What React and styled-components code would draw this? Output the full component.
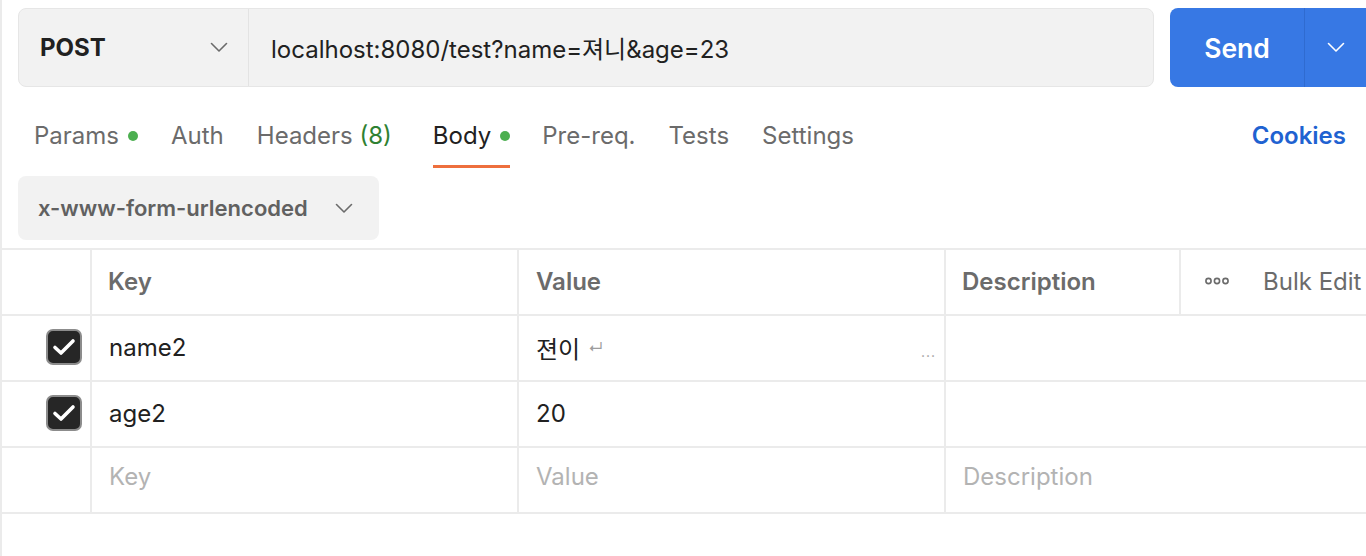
import React from "react";
import styled, { createGlobalStyle } from "styled-components";

const GlobalStyle = createGlobalStyle`
  html, body {
    margin: 0;
    padding: 0;
    background: #ffffff;
  }
  body {
    font-family: Inter, "Noto Sans CJK KR", "Noto Sans", sans-serif;
    color: #212121;
  }
  * {
    box-sizing: border-box;
  }
`;

const Page = styled.div`
  width: 1366px;
  height: 556px;
  overflow: hidden;
  border-left: 2px solid #ebebeb;
  display: flex;
  flex-direction: column;
`;

const TopBar = styled.div`
  display: flex;
  align-items: stretch;
  gap: 16px;
  padding: 8px 0 0 16px;
  height: 87px;
`;

const UrlBox = styled.div`
  flex: 0 0 1136px;
  display: flex;
  background: #f2f2f2;
  border: 1.5px solid #e6e6e6;
  border-radius: 8px;
`;

const MethodSelect = styled.div`
  width: 230px;
  display: flex;
  align-items: center;
  justify-content: space-between;
  padding: 0 20px 0 21px;
  border-right: 1.5px solid #e3e3e3;
  font-weight: 700;
  font-size: 24px;
  color: #212121;
`;

const UrlText = styled.div`
  display: flex;
  align-items: center;
  padding-left: 22px;
  font-size: 24px;
  color: #212121;
`;

const SendButton = styled.div`
  flex: 1;
  display: flex;
  background: #3778e4;
  border-radius: 8px 0 0 8px;
  color: #ffffff;
`;

const SendLabel = styled.div`
  width: 135px;
  display: flex;
  align-items: center;
  justify-content: center;
  font-size: 26.5px;
  font-weight: 600;
  border-right: 1.5px solid #2f6bd0;
`;

const SendCaret = styled.div`
  flex: 1;
  display: flex;
  align-items: center;
  justify-content: center;
`;

const TabBar = styled.div`
  display: flex;
  align-items: flex-start;
  height: 81px;
  padding: 0 20px 0 32px;
`;

const Tab = styled.div`
  position: relative;
  display: flex;
  align-items: center;
  gap: 9px;
  height: 81px;
  padding-top: 16px;
  margin-right: ${(p) => p.$gap ?? 33}px;
  font-size: 24px;
  color: ${(p) => (p.$active ? "#212121" : "#6b6b6b")};

  &::after {
    content: "";
    display: ${(p) => (p.$active ? "block" : "none")};
    position: absolute;
    left: 0;
    right: 0;
    bottom: 0;
    height: 3px;
    background: #ee6f3d;
  }
`;

const Dot = styled.span`
  width: 10px;
  height: 10px;
  border-radius: 50%;
  background: #4caf50;
`;

const Count = styled.span`
  color: #2f8132;
`;

const Cookies = styled.div`
  margin-left: auto;
  height: 81px;
  display: flex;
  align-items: center;
  padding-top: 16px;
  font-size: 24px;
  font-weight: 600;
  color: #1f62d1;
`;

const BodyBar = styled.div`
  padding: 8px 0 8px 16px;
`;

const BodyType = styled.div`
  width: 361px;
  height: 64px;
  display: flex;
  align-items: center;
  justify-content: space-between;
  padding: 0 26px 0 20px;
  background: #f2f2f2;
  border-radius: 8px;
  font-size: 22px;
  font-weight: 600;
  color: #616161;
`;

const Table = styled.div`
  display: grid;
  grid-template-columns: 90px 427px 427px 235px 1fr;
  border-top: 2px solid #ebebeb;
`;

const Cell = styled.div`
  height: 66px;
  display: flex;
  align-items: center;
  padding-left: ${(p) => p.$pad ?? 17}px;
  padding-bottom: ${(p) => p.$pb ?? 2}px;
  border-bottom: 2px solid #ebebeb;
  border-right: ${(p) => (p.$last ? "none" : "2px solid #ebebeb")};
  grid-column: ${(p) => (p.$span ? `span ${p.$span}` : "auto")};
  font-size: 24px;
  color: #212121;
  position: relative;
`;

const HeadCell = styled(Cell)`
  font-weight: 600;
  color: #6b6b6b;
`;

const HeadTools = styled(Cell)`
  gap: 34px;
  padding-left: 24px;
  color: #6b6b6b;
`;

const Placeholder = styled.span`
  color: #b3b3b3;
`;

const CheckCell = styled(Cell)`
  justify-content: flex-end;
  padding-left: 0;
  padding-right: 8px;
`;

const CheckBox = styled.div`
  width: 36px;
  height: 36px;
  border-radius: 7px;
  background: #262626;
  border: 2px solid #8c8c8c;
  display: flex;
  align-items: center;
  justify-content: center;
`;

const Enter = styled.span`
  margin-left: 8px;
  font-size: 15px;
  color: #9e9e9e;
`;

const Ellipsis = styled.span`
  position: absolute;
  right: 8px;
  top: 27px;
  font-size: 14px;
  letter-spacing: 1px;
  color: #9e9e9e;
`;

const Chevron = ({ color = "#6b6b6b", size = 18 }) => (
  <svg width={size} height={size / 2 + 2} viewBox="0 0 18 11" fill="none">
    <path d="M1.5 1.5 L9 9 L16.5 1.5" stroke={color} strokeWidth="1.6" strokeLinecap="round" strokeLinejoin="round" />
  </svg>
);

const Check = () => (
  <svg width="24" height="20" viewBox="0 0 24 20" fill="none">
    <path d="M3 10.5 L9 16 L21 4" stroke="#ffffff" strokeWidth="3.6" strokeLinecap="round" strokeLinejoin="round" />
  </svg>
);

const Dots = () => (
  <svg width="24" height="8" viewBox="0 0 24 8" fill="none">
    <circle cx="3.5" cy="4" r="2.6" stroke="#6b6b6b" strokeWidth="1.6" />
    <circle cx="12" cy="4" r="2.6" stroke="#6b6b6b" strokeWidth="1.6" />
    <circle cx="20.5" cy="4" r="2.6" stroke="#6b6b6b" strokeWidth="1.6" />
  </svg>
);

const rows = [
  { key: "name2", value: "젼이", multiline: true },
  { key: "age2", value: "20" },
];

export default function App() {
  return (
    <>
      <GlobalStyle />
      <Page>
        <TopBar>
          <UrlBox>
            <MethodSelect>
              POST
              <Chevron />
            </MethodSelect>
            <UrlText>localhost:8080/test?name=져니&amp;age=23</UrlText>
          </UrlBox>
          <SendButton>
            <SendLabel>Send</SendLabel>
            <SendCaret>
              <Chevron color="#ffffff" />
            </SendCaret>
          </SendButton>
        </TopBar>

        <TabBar>
          <Tab>
            Params <Dot />
          </Tab>
          <Tab>Auth</Tab>
          <Tab $gap={41}>
            <span>
              Headers <Count>(8)</Count>
            </span>
          </Tab>
          <Tab $active $gap={32}>
            Body <Dot />
          </Tab>
          <Tab>Pre-req.</Tab>
          <Tab>Tests</Tab>
          <Tab>Settings</Tab>
          <Cookies>Cookies</Cookies>
        </TabBar>

        <BodyBar>
          <BodyType>
            x-www-form-urlencoded
            <Chevron />
          </BodyType>
        </BodyBar>

        <Table>
          <HeadCell />
          <HeadCell $pad={16}>Key</HeadCell>
          <HeadCell>Value</HeadCell>
          <HeadCell $pad={16}>Description</HeadCell>
          <HeadTools $last>
            <Dots />
            <span>Bulk Edit</span>
          </HeadTools>

          {rows.map((r) => (
            <React.Fragment key={r.key}>
              <CheckCell>
                <CheckBox>
                  <Check />
                </CheckBox>
              </CheckCell>
              <Cell>{r.key}</Cell>
              <Cell>
                {r.value}
                {r.multiline && <Enter>↵</Enter>}
                {r.multiline && <Ellipsis>...</Ellipsis>}
              </Cell>
              <Cell $span={2} $last />
            </React.Fragment>
          ))}

          <Cell $pb={8} />
          <Cell $pb={8}>
            <Placeholder>Key</Placeholder>
          </Cell>
          <Cell $pb={8}>
            <Placeholder>Value</Placeholder>
          </Cell>
          <Cell $span={2} $last $pb={8}>
            <Placeholder>Description</Placeholder>
          </Cell>
        </Table>
      </Page>
    </>
  );
}
